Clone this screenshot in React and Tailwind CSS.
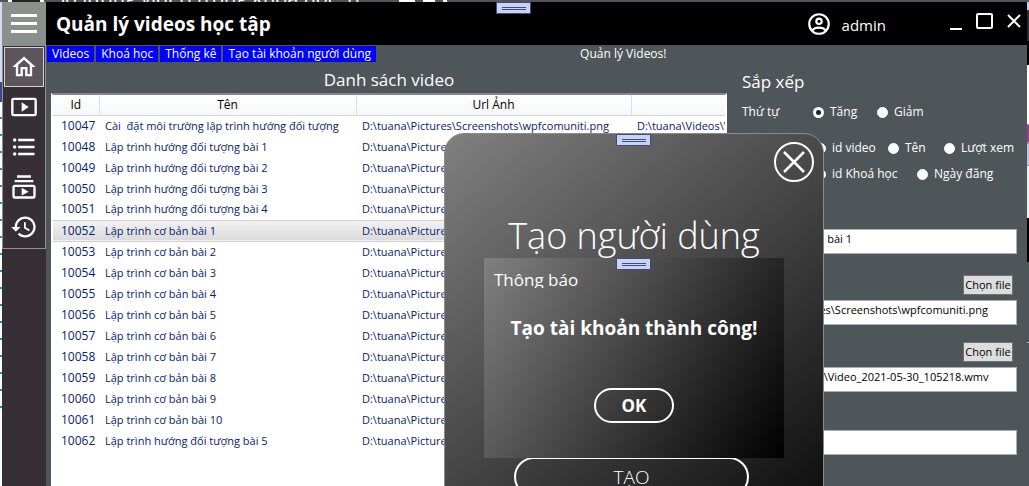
import React from "react";

const imagePath = "D:\\tuana\\Pictures\\Screenshots\\wpfcomuniti.png";
const videoPath = "D:\\tuana\\Videos\\Video_2021-05-30_105218.wmv";

const videos = [
  [10047, "Cài  đặt môi trường lập trình hướng đối tượng"],
  [10048, "Lập trình hướng đối tượng bài 1"],
  [10049, "Lập trình hướng đối tượng bài 2"],
  [10050, "Lập trình hướng đối tượng bài 3"],
  [10051, "Lập trình hướng đối tượng bài 4"],
  [10052, "Lập trình cơ bản bài 1"],
  [10053, "Lập trình cơ bản bài 2"],
  [10054, "Lập trình cơ bản bài 3"],
  [10055, "Lập trình cơ bản bài 4"],
  [10056, "Lập trình cơ bản bài 5"],
  [10057, "Lập trình cơ bản bài 6"],
  [10058, "Lập trình cơ bản bài 7"],
  [10059, "Lập trình cơ bản bài 8"],
  [10060, "Lập trình cơ bản bài 9"],
  [10061, "Lập trình cơ bản bài 10"],
  [10062, "Lập trình hướng đối tượng bài 5"],
];

const navItems = [
  { label: "Trang chủ", path: "M12 5.69l5 4.5V18h-2v-6H9v6H7v-7.81l5-4.5M12 3L2 12h3v8h6v-6h2v6h6v-8h3L12 3z" },
  { label: "Video", path: "M10 8v8l6-4-6-4zm11-4H3a2 2 0 0 0-2 2v12a2 2 0 0 0 2 2h18a2 2 0 0 0 2-2V6a2 2 0 0 0-2-2zm0 14H3V6h18v12z" },
  { label: "Danh sách", path: "M4 10.5a1.5 1.5 0 1 0 0 3 1.5 1.5 0 0 0 0-3zm0-6a1.5 1.5 0 1 0 0 3 1.5 1.5 0 0 0 0-3zm0 12a1.5 1.5 0 1 0 0 3 1.5 1.5 0 0 0 0-3zM7 19h14v-2H7v2zm0-6h14v-2H7v2zm0-8v2h14V5H7z" },
  { label: "Khoá học", path: "M4 6h16v2H4zm2-4h12v2H6zm14 8H4c-1.1 0-2 .9-2 2v8c0 1.100.9 2 2 2h16c1.100 0 2-.9 2-2v-8c0-1.100-.9-2-2-2zm0 10H4v-8h16v8zm-10-7.270v6.530L16 16z" },
  { label: "Lịch sử", path: "M13 3c-4.970 0-9 4.030-9 9H1l3.890 3.890.070.140L9 12H6c0-3.870 3.130-7 7-7s7 3.130 7 7-3.130 7-7 7c-1.930 0-3.680-.790-4.940-2.060l-1.420 1.420C8.270 19.990 10.510 21 13 21c4.970 0 9-4.030 9-9s-4.030-9-9-9zm-1 5v5l4.280 2.540.720-1.210-3.500-2.080V8H12z" },
];

function Grip({ className }) {
  return (
    <div className={`absolute z-20 flex h-3 w-[35px] flex-col items-center justify-center gap-px border border-[#3e4a80] bg-[#c9d5f0] ${className}`}>
      <span className="h-px w-6 bg-[#3e4a80]" />
      <span className="h-px w-6 bg-[#3e4a80]" />
    </div>
  );
}

function Radio({ name, label, checked, className = "" }) {
  return (
    <label className={`flex items-center gap-1.5 whitespace-nowrap ${className}`}>
      <input
        type="radio"
        name={name}
        defaultChecked={checked}
        className="size-[11px] shrink-0 appearance-none rounded-full border border-white bg-white checked:border-[3px] checked:bg-[#222]"
      />
      {label}
    </label>
  );
}

function Field({ label, value, file, className = "" }) {
  return (
    <div className={className}>
      <div className="mb-[5px] flex h-5 items-center justify-between pr-1">
        <span>{label}</span>
        {file && (
          <button className="h-5 w-[50px] overflow-hidden border border-[#707070] bg-[#dddddd] text-[11px] whitespace-nowrap text-black">
            Chọn file
          </button>
        )}
      </div>
      <input
        aria-label={label}
        defaultValue={value}
        className="block h-[25px] w-full border border-[#abadb3] bg-white px-0.5 pb-1.5 text-[11px] text-black"
      />
    </div>
  );
}

function Header() {
  return (
    <header className="relative flex h-[43px] shrink-0 bg-black text-white">
      <button aria-label="Menu" className="flex w-11 flex-col items-center justify-center gap-[5px] bg-[#8a908c]">
        <span className="h-[3px] w-[26px] bg-white" />
        <span className="h-[3px] w-[26px] bg-white" />
        <span className="h-[3px] w-[26px] bg-white" />
      </button>
      <h1 className="flex-1 self-center pl-2.5 text-[19px] leading-6 font-bold">Quản lý videos học tập</h1>
      <div className="flex items-center gap-2.5 pr-16">
        <svg viewBox="0 0 24 24" className="size-[26px] fill-none stroke-white stroke-2" aria-hidden="true">
          <circle cx="12" cy="12" r="9" />
          <circle cx="12" cy="9.500" r="2.500" />
          <path d="M6 18c2-3.500 10-3.500 12 0" />
        </svg>
        <span className="pt-0.5 text-[15px]">admin</span>
      </div>
      <div className="flex items-start gap-3.5 pt-2.5 pr-1.5">
        <button aria-label="Thu nhỏ">
          <svg viewBox="0 0 12 18" className="h-[18px] w-3 stroke-white stroke-2"><path d="M0 17h12" /></svg>
        </button>
        <button aria-label="Phóng to">
          <svg viewBox="0 0 17 18" className="h-[18px] w-[17px] fill-none stroke-white stroke-2"><rect x="1" y="2" width="15" height="14" rx="1" /></svg>
        </button>
        <button aria-label="Đóng">
          <svg viewBox="0 0 14 18" className="h-[18px] w-3.5 stroke-white stroke-2"><path d="M1 3l12 12M13 3L1 15" /></svg>
        </button>
      </div>
      <Grip className="top-0 left-[494px]" />
    </header>
  );
}

function Sidebar() {
  return (
    <aside className="w-11 shrink-0 bg-[#362f36]">
      <nav className="flex flex-col border border-[#8f9090] p-px">
        {navItems.map((item, i) => (
          <button
            key={item.label}
            aria-label={item.label}
            className={
              i === 0
                ? "flex h-10 items-center justify-center border border-[#d5d3d5] bg-[#5c565c]"
                : "flex h-10 items-center justify-center"
            }
          >
            <svg viewBox="0 0 24 24" className="size-7 fill-white" aria-hidden="true">
              <path d={item.path} />
            </svg>
          </button>
        ))}
      </nav>
    </aside>
  );
}

function VideoTable() {
  return (
    <section className="flex min-w-0 flex-1 flex-col pl-[5px]">
      <h2 className="h-[31px] pt-1.5 text-center text-[17px] leading-6">Danh sách video</h2>
      <div className="flex-1 overflow-hidden border-2 border-b-0 border-[#828790] border-r-white border-l-white bg-white">
        <table className="w-[904px] table-fixed border-collapse text-[#042271]">
          <colgroup>
            <col className="w-[46px]" />
            <col className="w-[257px]" />
            <col className="w-[275px]" />
            <col className="w-[326px]" />
          </colgroup>
          <thead className="bg-linear-to-b from-white to-[#f5f7f8] text-black">
            <tr className="h-5 border-b border-[#d5d5d5]">
              {["Id", "Tên", "Url Ảnh", ""].map((h) => (
                <th key={h} className="border-r border-[#dcdfe1] p-0 text-center font-normal">{h}</th>
              ))}
            </tr>
          </thead>
          <tbody>
            {videos.map(([id, name]) => (
              <tr
                key={id}
                className={
                  id === 10052
                    ? "h-[21px] border-y border-[#d0d0d0] bg-linear-to-b from-[#f2f2f2] to-[#dadada]"
                    : "h-[21px]"
                }
              >
                <td className="p-0 pl-2">{id}</td>
                <td className="p-0 pl-1.5 text-[11px] whitespace-pre">{name}</td>
                <td className="p-0 pl-1.5 text-[11px] whitespace-nowrap">{imagePath}</td>
                <td className="p-0 pl-1.5 text-[11px] whitespace-nowrap">{videoPath}</td>
              </tr>
            ))}
          </tbody>
        </table>
      </div>
    </section>
  );
}

function Details() {
  return (
    <section className="w-[300px] shrink-0 pr-2.5 pl-[11px]">
      <div className="pl-1">
        <h2 className="pt-2 text-[17px] leading-6">Sắp xếp</h2>
        <div className="mt-2 flex h-5 items-center">
          <span className="w-[71px]">Thứ tự</span>
          <Radio name="order" label="Tăng" checked className="w-16" />
          <Radio name="order" label="Giảm" />
        </div>
        <div className="mt-4 flex h-5 items-center">
          <span className="w-[73px]">Theo</span>
          <Radio name="key" label="id video" className="w-[73px]" />
          <Radio name="key" label="Tên" className="w-14" />
          <Radio name="key" label="Lượt xem" />
        </div>
        <div className="mt-1.5 flex h-5 items-center pl-[73px]">
          <Radio name="key" label="id Khoá học" className="w-[102px]" />
          <Radio name="key" label="Ngày đăng" />
        </div>
      </div>
      <Field label="Tên" value="Lập trình cơ bản bài 1" className="mt-5" />
      <Field label="Ảnh" value={imagePath} file className="mt-[21px]" />
      <Field label="Video" value={videoPath} file className="mt-[17px]" />
      <Field label="Mô tả" value="" className="mt-[13px]" />
    </section>
  );
}

function CreateUserDialog() {
  return (
    <div
      role="dialog"
      aria-label="Tạo người dùng"
      className="absolute top-[133px] left-[444px] z-10 h-[450px] w-[380px] rounded-[20px] border border-[#8b8b8b] bg-[linear-gradient(140deg,#808080,#000000)] text-white"
    >
      <Grip className="top-0 left-[171px]" />
      <div className="flex justify-end pt-2 pr-[9px]">
        <button aria-label="Đóng" className="flex size-10 items-center justify-center rounded-full border-2 border-white">
          <svg viewBox="0 0 24 24" className="size-6 stroke-white stroke-[2.5]"><path d="M2 2l20 20M22 2L2 22" /></svg>
        </button>
      </div>
      <h2 className="pt-7 text-center text-4xl leading-[52px] font-light">Tạo người dùng</h2>
      <button className="mt-[195px] ml-[69px] flex h-10 w-[235px] items-center justify-center rounded-full border-2 border-white text-[19px] leading-6 font-light">
        TẠO
      </button>
      <div
        role="alertdialog"
        aria-label="Thông báo"
        className="absolute top-[124px] left-[39px] flex h-[200px] w-[300px] flex-col items-center bg-[linear-gradient(122deg,#808080,#000000)]"
      >
        <Grip className="top-0 left-[132px]" />
        <h3 className="mt-2.5 h-5 self-start overflow-hidden pl-2.5 text-[17px] leading-6">Thông báo</h3>
        <p className="mt-7 text-[19px] leading-6 font-bold">Tạo tài khoản thành công!</p>
        <button className="mt-12 h-[35px] w-20 rounded-full border-2 border-white text-[17px] leading-6 font-bold">OK</button>
      </div>
    </div>
  );
}

/* Slivers of the window that lies behind this one. */
function TopSliver() {
  return (
    <div aria-hidden="true" className="flex h-0.5 shrink-0 items-end overflow-hidden bg-[#4f5659] pl-2">
      <span className="h-0.5 w-9 border-x-4 border-white bg-[#222]" />
      <span className="ml-2.5 h-[9px] text-[20px] leading-[9px] whitespace-nowrap">Số lượng video trong khoá học: 8</span>
      <span className="ml-10 h-0.5 w-4 bg-white" />
      <span className="ml-2 h-0.5 w-3 bg-white" />
      <span className="ml-2 h-0.5 w-1 bg-white" />
    </div>
  );
}

function LeftSliver() {
  return (
    <div aria-hidden="true" className="flex w-0.5 shrink-0 flex-col bg-white">
      <span className="h-20 bg-[#d3dbee]" />
      <span className="h-5 bg-[#3d4a80]" />
      {Array.from({ length: 18 }, (_, i) => (
        <span key={i} className="mt-[15px] h-0.5 bg-[#2b91af]" />
      ))}
    </div>
  );
}

function RightSliver() {
  return (
    <div aria-hidden="true" className="flex w-0.5 shrink-0 flex-col bg-[#4f5659]">
      <span className="h-2 bg-[#c9cfe6]" />
      <span className="h-[31px] bg-[#2d2d30]" />
      <span className="h-6 bg-black" />
      <span className="h-[59px] bg-white" />
      <span className="h-[19px] border-y border-[#999] bg-[#953d96]" />
      <span className="h-[23px] border-y border-[#999] bg-[#c6c4e6]" />
      <span className="h-[52px] bg-[#eef2f4]" />
      <span className="h-11 bg-black" />
      <span className="mt-20 h-px bg-[#b0b4b6]" />
    </div>
  );
}

export default function App() {
  return (
    <div className="relative flex h-screen flex-col overflow-hidden bg-[#4f5659] font-['Open_Sans','Noto_Sans',sans-serif] text-[12px] leading-4 text-white">
      <TopSliver />
      <div className="flex min-h-0 flex-1">
        <LeftSliver />
        <div className="flex min-w-0 flex-1 flex-col">
          <Header />
          <div className="flex min-h-0 flex-1">
            <Sidebar />
            <main className="flex min-w-0 flex-1 flex-col">
              <div className="flex h-[17px] shrink-0 items-end gap-0.5 pl-px">
                {["Videos", "Khoá học", "Thống kê", "Tạo tài khoản người dùng"].map((t) => (
                  <button key={t} className="h-4 bg-[#0000ff] px-[5px] leading-4 whitespace-nowrap">{t}</button>
                ))}
                <span className="flex-1 pl-[202px]">Quản lý Videos!</span>
              </div>
              <div className="flex min-h-0 flex-1">
                <VideoTable />
                <Details />
              </div>
            </main>
          </div>
        </div>
        <RightSliver />
      </div>
      <CreateUserDialog />
    </div>
  );
}
